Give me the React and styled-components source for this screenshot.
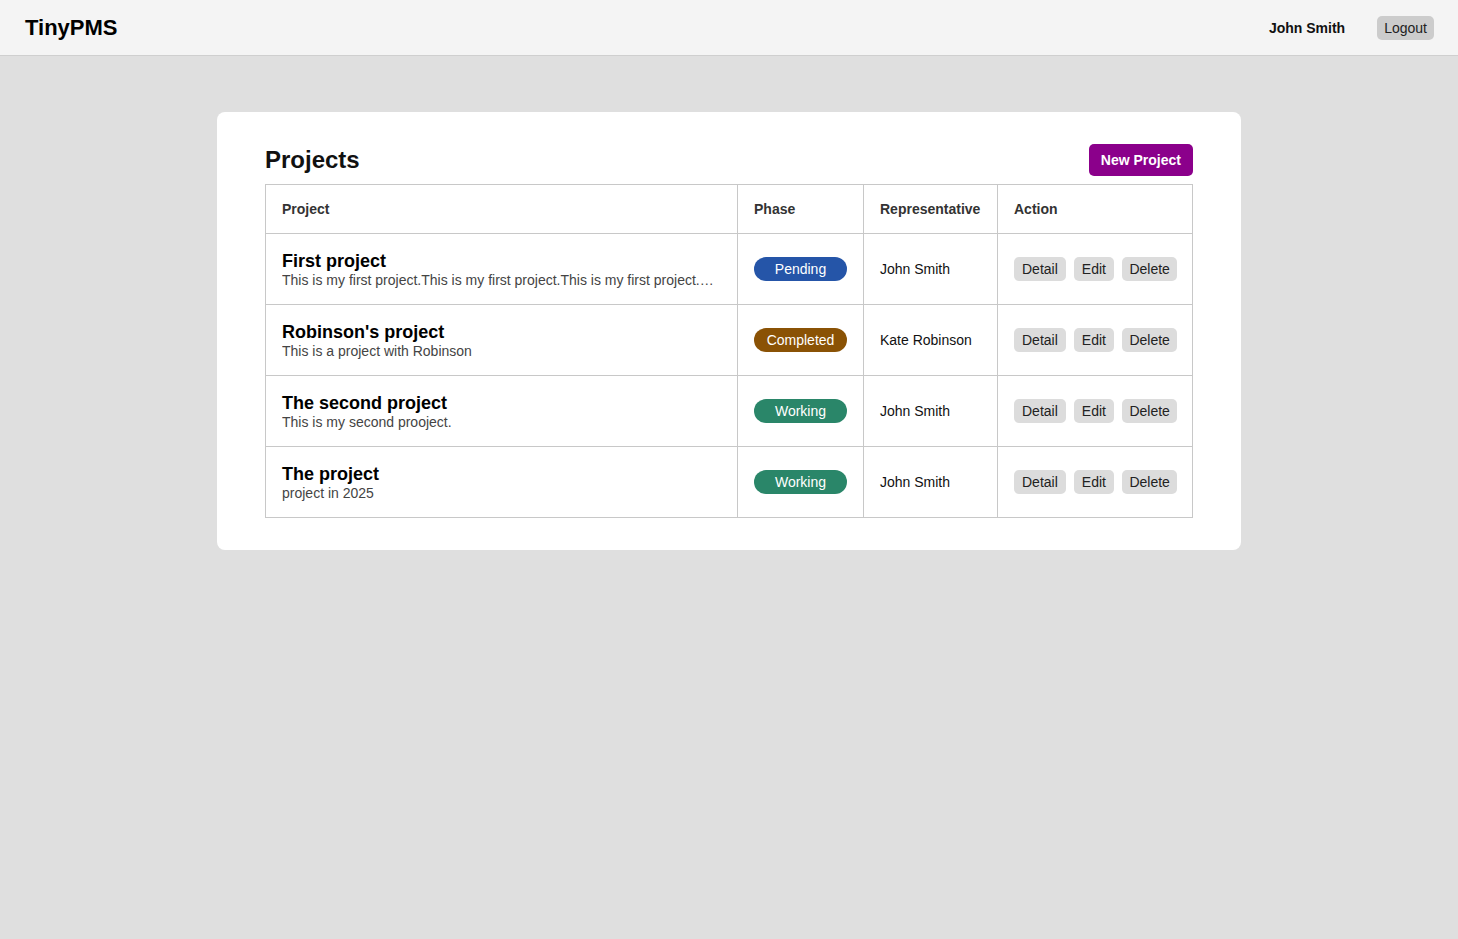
import React from 'react'
import styled, { createGlobalStyle } from 'styled-components'

const GlobalStyle = createGlobalStyle`
  body {
    margin: 0;
    background: #dfdfdf;
    font-family: "Liberation Sans", Arial, sans-serif;
    color: #111;
  }
`

const TopBar = styled.header`
  display: flex;
  align-items: center;
  justify-content: space-between;
  height: 55px;
  padding: 0 24px 0 25px;
  background: #f4f4f4;
  border-bottom: 1px solid #cfcfcf;
`
const Brand = styled.div`
  font-size: 22px;
  font-weight: 700;
  color: #000;
`
const UserArea = styled.div`
  display: flex;
  align-items: center;
  gap: 32px;
`
const UserName = styled.span`
  font-size: 14px;
  font-weight: 700;
  color: #111;
`
const GreyButton = styled.button`
  font-family: inherit;
  font-size: 14px;
  color: #222;
  background: ${p => p.$bg || '#dcdcdc'};
  border: none;
  border-radius: 5px;
  height: 24px;
  padding: 0 ${p => p.$pad || 8}px;
  cursor: pointer;
`
const Main = styled.main`
  display: flex;
  justify-content: center;
  padding-top: 56px;
`
const Card = styled.section`
  width: 1024px;
  box-sizing: border-box;
  background: #fff;
  border-radius: 8px;
  padding: 32px 48px 32px;
`
const CardHead = styled.div`
  display: flex;
  align-items: center;
  justify-content: space-between;
  margin-bottom: 8px;
`
const Title = styled.h1`
  margin: 0;
  font-size: 24px;
  font-weight: 700;
  color: #111;
`
const PrimaryButton = styled.button`
  font-family: inherit;
  font-size: 14px;
  font-weight: 700;
  color: #fff;
  background: #8b008b;
  border: none;
  border-radius: 5px;
  height: 32px;
  padding: 0 12px;
`
const Table = styled.table`
  width: 928px;
  border-collapse: collapse;
  table-layout: fixed;
`
const Th = styled.th`
  width: ${p => p.$w - 33}px;
  text-align: left;
  font-size: 14px;
  font-weight: 700;
  color: #333;
  height: 48px;
  padding: 0 16px;
  border: 1px solid #c8c8c8;
`
const Td = styled.td`
  height: 70px;
  padding: 0 16px;
  border: 1px solid #c8c8c8;
  vertical-align: middle;
  font-size: 14px;
  color: #111;
`
const ProjectName = styled.div`
  font-size: 18px;
  font-weight: 700;
  color: #000;
  line-height: 20px;
`
const ProjectDesc = styled.div`
  margin-top: 1px;
  font-size: 14px;
  color: #444;
  line-height: 16px;
  white-space: nowrap;
  overflow: hidden;
  text-overflow: ellipsis;
`
const phaseColors = {
  Pending: '#2555a8',
  Completed: '#8a5205',
  Working: '#2a8669'
}
const Badge = styled.span`
  display: inline-block;
  width: 93px;
  height: 24px;
  line-height: 24px;
  border-radius: 12px;
  text-align: center;
  font-size: 14px;
  color: #fff;
  background: ${p => phaseColors[p.$phase]};
`
const Actions = styled.div`
  display: flex;
  gap: 8px;
`

const projects = [
  {
    name: 'First project',
    desc: 'This is my first project.This is my first project.This is my first project.This is my first project.',
    phase: 'Pending',
    rep: 'John Smith'
  },
  { name: "Robinson's project", desc: 'This is a project with Robinson', phase: 'Completed', rep: 'Kate Robinson' },
  { name: 'The second project', desc: 'This is my second prooject.', phase: 'Working', rep: 'John Smith' },
  { name: 'The project', desc: 'project in 2025', phase: 'Working', rep: 'John Smith' }
]

export default function App() {
  return (
    <>
      <GlobalStyle />
      <TopBar>
        <Brand>TinyPMS</Brand>
        <UserArea>
          <UserName>John Smith</UserName>
          <GreyButton $bg="#cccccc" $pad={7}>Logout</GreyButton>
        </UserArea>
      </TopBar>
      <Main>
        <Card>
          <CardHead>
            <Title>Projects</Title>
            <PrimaryButton>New Project</PrimaryButton>
          </CardHead>
          <Table>
            <thead>
              <tr>
                <Th $w={472}>Project</Th>
                <Th $w={126}>Phase</Th>
                <Th $w={134}>Representative</Th>
                <Th $w={195}>Action</Th>
              </tr>
            </thead>
            <tbody>
              {projects.map(p => (
                <tr key={p.name}>
                  <Td>
                    <ProjectName>{p.name}</ProjectName>
                    <ProjectDesc>{p.desc}</ProjectDesc>
                  </Td>
                  <Td>
                    <Badge $phase={p.phase}>{p.phase}</Badge>
                  </Td>
                  <Td>{p.rep}</Td>
                  <Td>
                    <Actions>
                      <GreyButton>Detail</GreyButton>
                      <GreyButton>Edit</GreyButton>
                      <GreyButton $pad={7.5}>Delete</GreyButton>
                    </Actions>
                  </Td>
                </tr>
              ))}
            </tbody>
          </Table>
        </Card>
      </Main>
    </>
  )
}
